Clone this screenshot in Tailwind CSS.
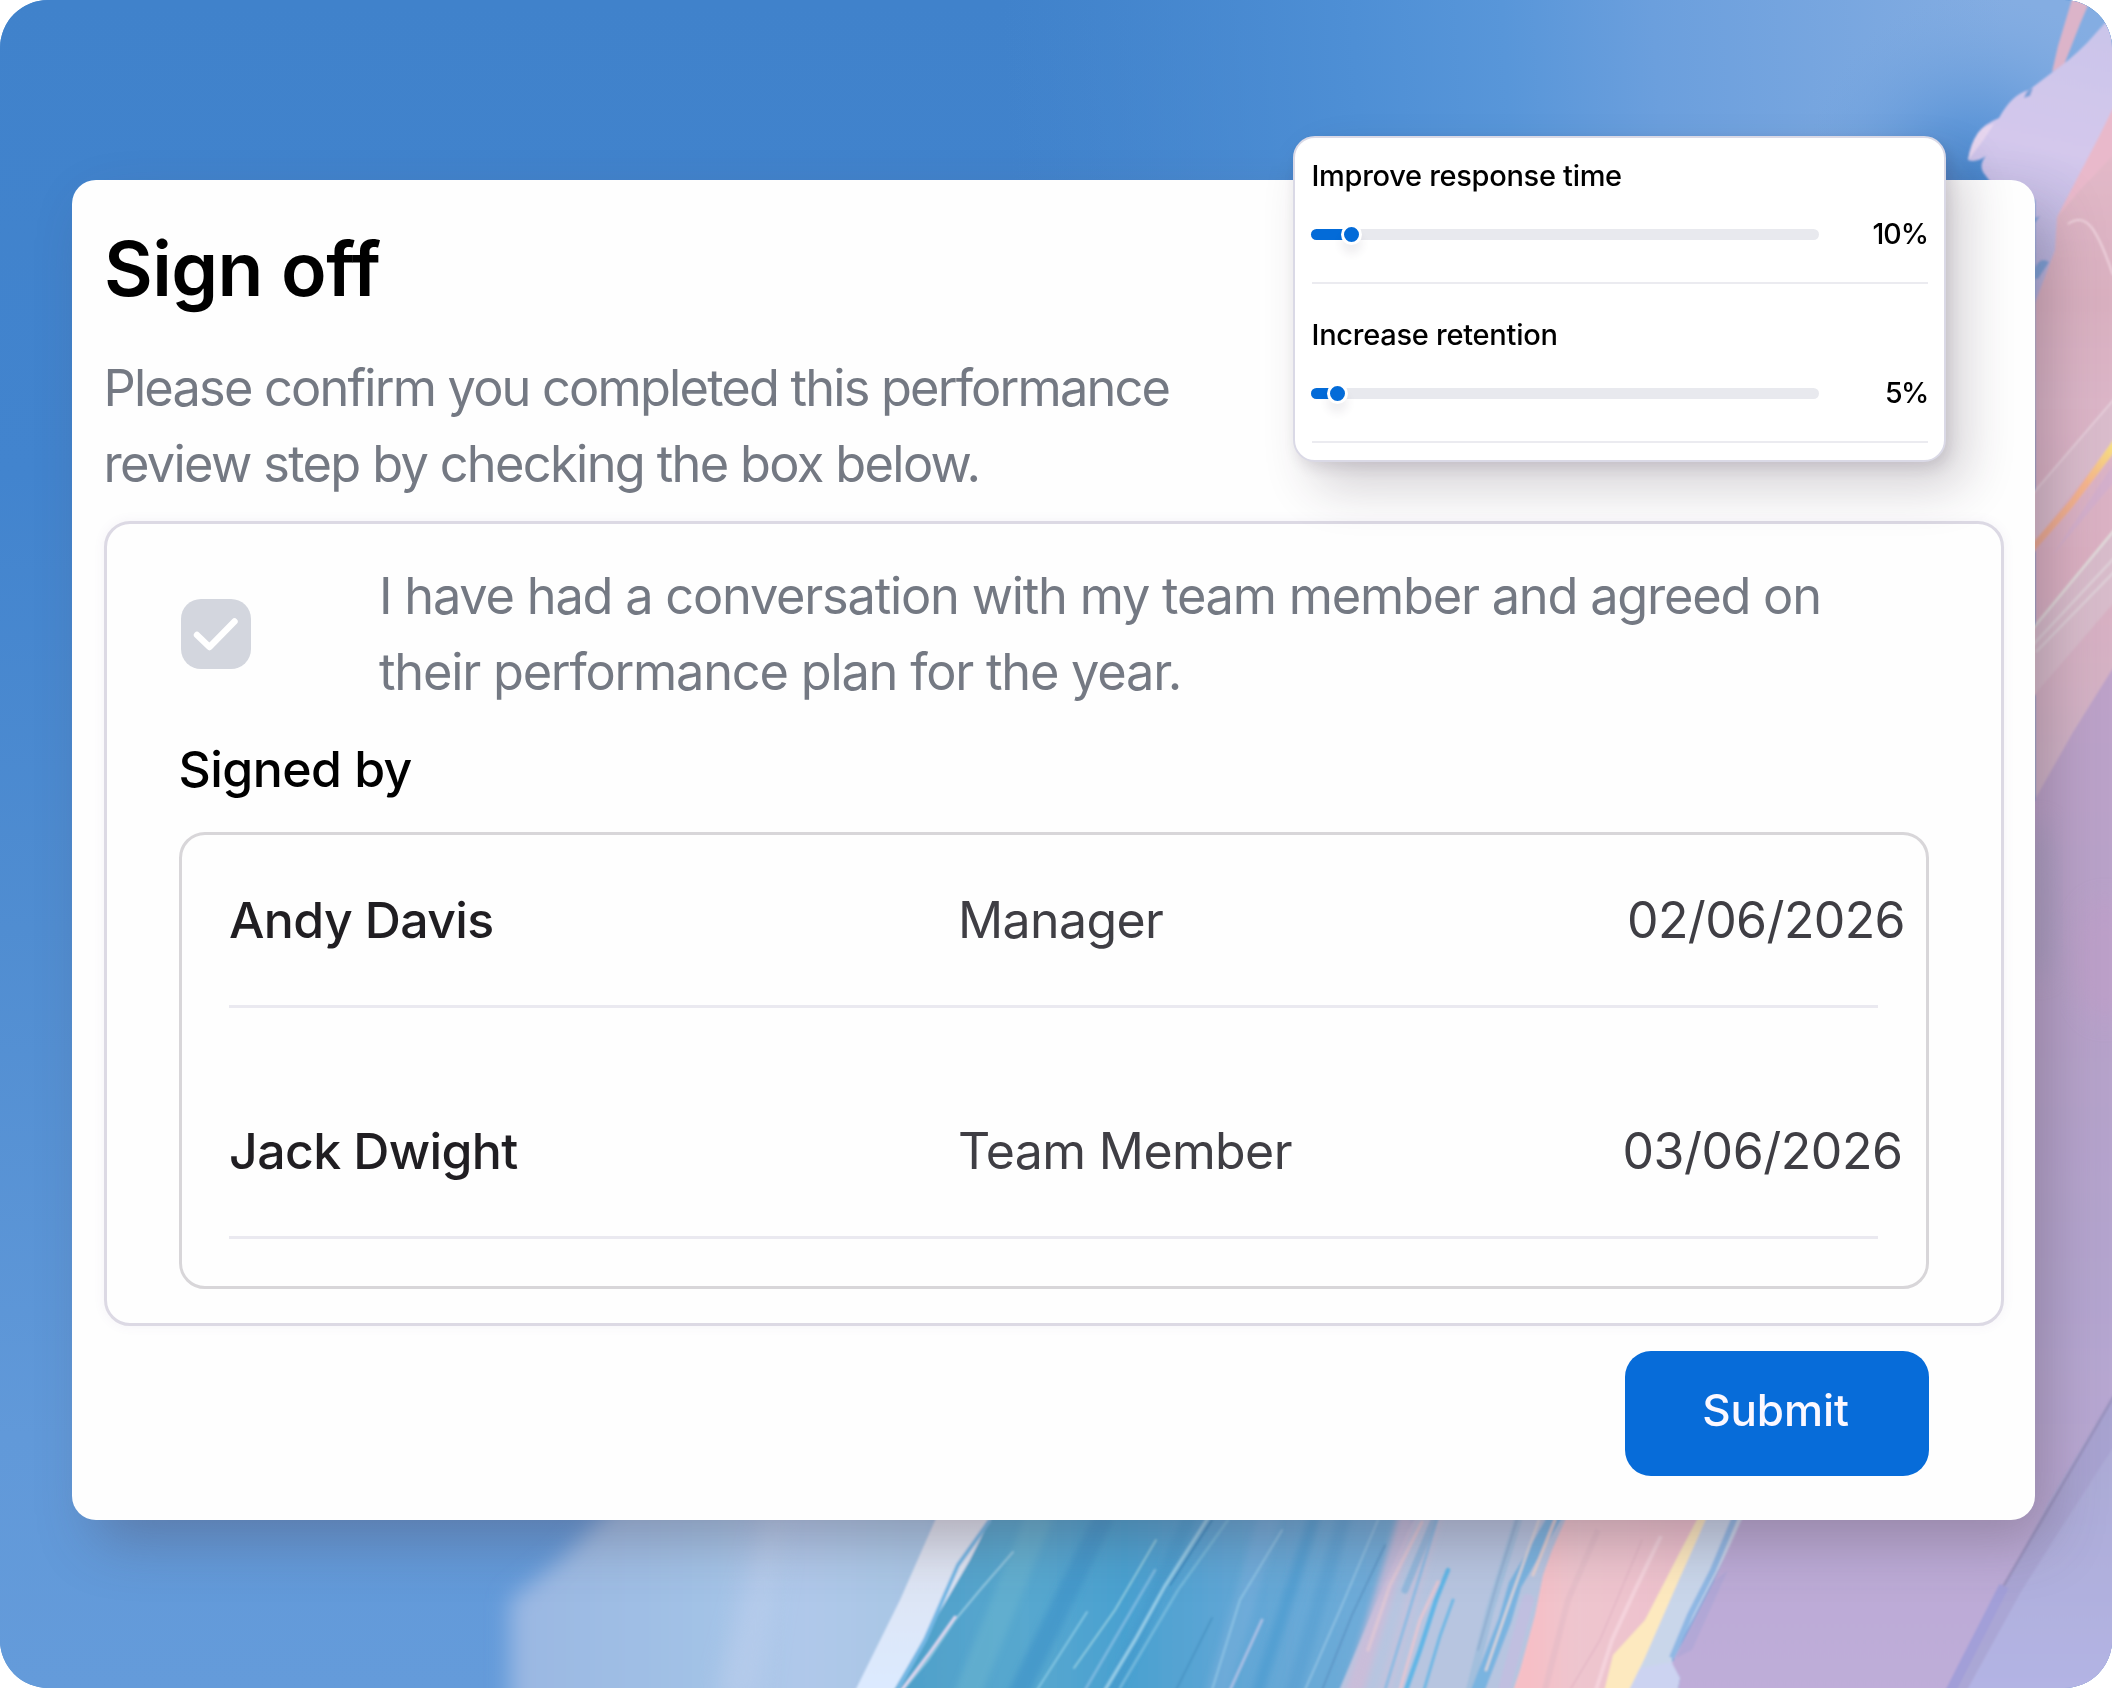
<!DOCTYPE html>
<html lang="en">
<head>
<meta charset="utf-8">
<title>Sign off</title>
<script src="https://cdn.jsdelivr.net/npm/@tailwindcss/browser@4"></script>
</head>
<body class="bg-white font-['Inter',sans-serif]">
<main class="relative flex h-[1688px] w-[2112px] overflow-hidden rounded-[48px] bg-[#4a89cf]">

  <!-- Painted backdrop -->
  <svg class="absolute inset-0 h-full w-full" viewBox="0 0 2112 1688" preserveAspectRatio="none" aria-hidden="true">
    <defs>
      <linearGradient id="sky" x1="0" y1="0" x2="0" y2="1"><stop offset="0" stop-color="#4082cb"/><stop offset=".28" stop-color="#4284ce"/><stop offset=".55" stop-color="#508dd1"/><stop offset=".85" stop-color="#6199d9"/><stop offset="1" stop-color="#649bda"/></linearGradient>
      <linearGradient id="skyR" x1="1000" y1="0" x2="2000" y2="-60" gradientUnits="userSpaceOnUse"><stop offset="0" stop-color="#4a8bd1" stop-opacity="0"/><stop offset=".35" stop-color="#4e8fd5"/><stop offset=".5" stop-color="#5896d9"/><stop offset=".65" stop-color="#6b9fdd"/><stop offset="1" stop-color="#84ade2"/></linearGradient>
      <radialGradient id="skyV" cx="1975" cy="185" r="190" gradientUnits="userSpaceOnUse"><stop offset="0" stop-color="#4686cd"/><stop offset=".35" stop-color="#5792d6" stop-opacity=".75"/><stop offset="1" stop-color="#7aa8e0" stop-opacity="0"/></radialGradient>
      <linearGradient id="lav" x1="2090" y1="30" x2="2030" y2="300" gradientUnits="userSpaceOnUse"><stop offset="0" stop-color="#cbc5ea"/><stop offset=".45" stop-color="#d4c8ec"/><stop offset="1" stop-color="#afaedb"/></linearGradient>
      <linearGradient id="rose" x1="0" y1="100" x2="0" y2="820" gradientUnits="userSpaceOnUse"><stop offset="0" stop-color="#e6bccb"/><stop offset=".28" stop-color="#d9b0c0"/><stop offset=".42" stop-color="#dcb6c8"/><stop offset=".65" stop-color="#dbb0c2"/><stop offset="1" stop-color="#cdb4c8"/></linearGradient>
      <linearGradient id="plum" x1="0" y1="680" x2="0" y2="1688" gradientUnits="userSpaceOnUse"><stop offset="0" stop-color="#bda2c9"/><stop offset=".3" stop-color="#b7a2c9"/><stop offset=".6" stop-color="#b4a5cf"/><stop offset="1" stop-color="#bfadd9"/></linearGradient>
      <linearGradient id="peri" x1="0" y1="1400" x2="0" y2="1688" gradientUnits="userSpaceOnUse"><stop offset="0" stop-color="#aba9d3"/><stop offset="1" stop-color="#b3b4e4"/></linearGradient>
      <linearGradient id="haze" x1="510" y1="0" x2="900" y2="0" gradientUnits="userSpaceOnUse"><stop offset="0" stop-color="#9ab7e2"/><stop offset=".5" stop-color="#a2c2e6"/><stop offset=".75" stop-color="#b0c9ea"/><stop offset="1" stop-color="#a9c6e5"/></linearGradient>
      <linearGradient id="teal" x1="900" y1="0" x2="1400" y2="0" gradientUnits="userSpaceOnUse"><stop offset="0" stop-color="#4fa0ca"/><stop offset=".25" stop-color="#58a8cf"/><stop offset=".45" stop-color="#4aa1d0"/><stop offset=".7" stop-color="#63a7d6"/><stop offset="1" stop-color="#72add9"/></linearGradient>
      <linearGradient id="pale" x1="0" y1="1520" x2="0" y2="1688" gradientUnits="userSpaceOnUse"><stop offset="0" stop-color="#dfe2ee"/><stop offset="1" stop-color="#dceaff"/></linearGradient>
      <linearGradient id="pink" x1="1530" y1="0" x2="1690" y2="0" gradientUnits="userSpaceOnUse"><stop offset="0" stop-color="#f6bfc6"/><stop offset=".3" stop-color="#eec6cf"/><stop offset="1" stop-color="#edc0cd"/></linearGradient>
      <linearGradient id="amber" x1="2035" y1="540" x2="2112" y2="440" gradientUnits="userSpaceOnUse"><stop offset="0" stop-color="#eeaa90"/><stop offset=".6" stop-color="#f6b58d"/><stop offset="1" stop-color="#f6e07f"/></linearGradient>
      <filter id="b1"><feGaussianBlur stdDeviation=".8"/></filter>
      <filter id="b3"><feGaussianBlur stdDeviation="3"/></filter>
      <filter id="b12" x="-20%" y="-40%" width="140%" height="180%"><feGaussianBlur stdDeviation="11"/></filter>
    </defs>

    <rect width="2112" height="1688" fill="url(#sky)"/>
    <rect x="1000" width="1112" height="420" fill="url(#skyR)"/>
    <rect x="1780" width="332" height="420" fill="url(#skyV)"/>

    <!-- Right edge -->
    <g filter="url(#b1)">
      <path d="M2073-4L2092-4L2080 24L2064 65L2052 72L2058 46Z" fill="#dcb4c9"/>
      <path d="M2130-5L2087 43Q2070 60 2054 71L2029 90Q2012 94 1999 118Q1984 124 1978 133Q1970 144 1968 160Q1976 163 1986 156Q1979 164 1983 172L1992 184L2035 200L2035 303L2047 290L2112 260Z" fill="url(#lav)"/>
      <path d="M1968 160Q1971 144 1978 133Q1984 125 1994 124L1982 142Z" fill="#e6d5ee"/>
      <path d="M2024 98Q2026 90 2033 88L2030 96Z M2035 218L2040 216L2035 223Z M2035 268Q2040 256 2049 262L2038 279L2035 279Z" fill="#7aa0d8"/>
      <path d="M2118 98L2100 135L2077 179L2057 217L2055 250L2035 303L2035 810L2118 810Z" fill="url(#rose)"/>
      <path d="M2118 98L2100 135L2077 179L2058 216L2080 190L2118 150Z" fill="#e9b9cb"/>
      <path d="M2068 224C2085 212 2096 225 2113 275" fill="none" stroke="#eed2dd" stroke-width="2"/>
      <path d="M2030 495L2116 395L2116 438L2030 548Z" fill="#dabccc"/>
      <path d="M2030 497L2116 397" stroke="#ead3de" stroke-width="1.5" fill="none"/>
      <path d="M2030 546L2070 500L2116 436L2116 450L2072 508L2030 556Z" fill="url(#amber)"/>
      <path d="M2052 556L2116 460L2116 480Z" fill="#d4b0cc"/>
      <path d="M2030 632L2116 528L2116 600L2030 700Z" fill="#d8bccb"/>
      <path d="M2030 632L2116 528" stroke="#e2dcdc" stroke-width="2.5"/>
      <path d="M2030 648L2116 556M2036 652L2116 570" stroke="#dfd0d8" stroke-width="2.5"/>
      <path d="M2118 660L2073 732L2030 808L2030 1688L2118 1688Z" fill="url(#plum)"/>
    </g>
    <ellipse cx="2105" cy="960" rx="32" ry="60" fill="#c09fc9" opacity=".6" filter="url(#b12)"/>
    <ellipse cx="2040" cy="900" rx="16" ry="80" fill="#a39dc0" opacity=".5" filter="url(#b12)"/>

    <!-- Bottom edge -->
    <path d="M628 1490L560 1560L510 1600L510 1720L950 1720L950 1490Z" fill="url(#haze)" filter="url(#b12)"/>
    <path d="M770 1500L745 1590L715 1700L760 1700L790 1500Z" fill="#b9cdec" opacity=".7" filter="url(#b12)"/>
    <g filter="url(#b1)">
      <path d="M1340 1500L1760 1500L1640 1700L1260 1700Z" fill="#b7c5e0"/>
      <path d="M1000 1500L1425 1500L1408 1530L1335 1700L885 1700Z" fill="url(#teal)"/>
      <path d="M944 1500L1000 1500L970 1560L894 1690L853 1695L900 1600Z" fill="url(#pale)"/>
      <path d="M990 1520L958 1565L925 1640L897 1690" stroke="#74b8e4" stroke-width="4" fill="none"/>
    </g>
    <g filter="url(#b3)" fill="none">
      <path d="M1105 1515L1015 1700" stroke="#3f94c9" stroke-width="20" opacity=".7"/>
      <path d="M1040 1515L965 1700" stroke="#6ab4cf" stroke-width="26" opacity=".55"/>
      <path d="M1190 1515L1110 1700" stroke="#4499cc" stroke-width="14" opacity=".6"/>
      <path d="M1270 1515L1215 1700" stroke="#7ab0dc" stroke-width="22" opacity=".5"/>
      <path d="M1315 1515L1255 1700" stroke="#4b9bd0" stroke-width="12" opacity=".7"/>
      <path d="M1345 1515L1290 1700" stroke="#5a9fd2" stroke-width="14" opacity=".7"/>
      <path d="M1408 1515L1352 1700" stroke="#cdbcd8" stroke-width="18" opacity=".85"/>
      <path d="M1436 1515L1382 1700" stroke="#c8c2dc" stroke-width="12" opacity=".7"/>
    </g>
    <g fill="none" stroke-linecap="round" filter="url(#b1)">
      <path d="M1013 1552L980 1590L955 1620L928 1660L903 1690" stroke="#93c8e0" stroke-width="2"/>
      <path d="M955 1617L928 1655L900 1692" stroke="#dfd6ee" stroke-width="3"/>
      <path d="M1156 1540L1115 1610L1074 1668" stroke="#8fcbe0" stroke-width="2"/>
      <path d="M1087 1612L1037 1690" stroke="#84c6e2" stroke-width="2"/>
      <path d="M1208 1518L1165 1586L1135 1640L1105 1690" stroke="#93cae6" stroke-width="3.5"/>
      <path d="M1212 1520L1170 1585" stroke="#3a88bd" stroke-width="1.6"/>
      <path d="M1228 1520L1178 1590L1120 1688" stroke="#74b9dd" stroke-width="2.5"/>
      <path d="M1155 1570L1085 1690" stroke="#7dbae0" stroke-width="2.5"/>
      <path d="M1282 1530L1240 1600L1212 1690" stroke="#8cc2e4" stroke-width="2"/>
      <path d="M1212 1618L1176 1690" stroke="#4790c2" stroke-width="1.6"/>
      <path d="M1262 1620L1230 1690" stroke="#a9bfe4" stroke-width="3"/>
      <path d="M1378 1520L1340 1610L1305 1690" stroke="#8cbfe2" stroke-width="2"/>
      <path d="M1385 1545L1352 1615L1322 1690" stroke="#5a93c3" stroke-width="1.5"/>
      <path d="M1422 1522L1390 1585L1368 1650" stroke="#dcc6d6" stroke-width="3.5"/>
      <path d="M1440 1510L1385 1690" stroke="#8fbbe2" stroke-width="3"/>
      <path d="M1434 1520L1405 1590" stroke="#82b4dc" stroke-width="7" opacity=".7"/>
      <path d="M1448 1570L1436 1600L1420 1650L1406 1690" stroke="#62b6e6" stroke-width="4.5"/>
      <path d="M1438 1582L1420 1620L1400 1690" stroke="#dfc6d4" stroke-width="3.5"/>
      <path d="M1453 1600L1440 1636L1424 1690" stroke="#72b8e4" stroke-width="3"/>
      <path d="M1518 1520L1490 1610L1470 1690" stroke="#98bcdc" stroke-width="8" opacity=".7"/>
      <path d="M1517 1520L1498 1580L1478 1650" stroke="#8ba8cc" stroke-width="1.5"/>
      <path d="M1556 1515L1515 1585L1505 1620L1476 1695" stroke="#7ab4e0" stroke-width="13"/>
      <path d="M1539 1520L1512 1595L1486 1670" stroke="#d9d4da" stroke-width="2.5"/>
      <path d="M1555 1520L1533 1575" stroke="#e4d0d0" stroke-width="3"/>
      <path d="M1528 1600L1504 1690" stroke="#c0bfe0" stroke-width="12"/>
    </g>
    <g filter="url(#b1)">
      <path d="M1574 1500L1706 1500L1660 1600L1620 1660L1604 1700L1510 1700L1520 1670L1535 1615L1543 1575L1552 1550Z" fill="url(#pink)"/>
      <path d="M1661 1536L1635 1590L1612 1640L1596 1690" stroke="#f5d3dc" stroke-width="4" fill="none"/>
      <path d="M1642 1540L1600 1640L1570 1690" stroke="#dfb2c2" stroke-width="1.5" fill="none" opacity=".7"/>
      <path d="M1598 1530L1568 1600L1545 1690" stroke="#e0b9c6" stroke-width="6" fill="none" opacity=".5"/>
      <path d="M1702 1510L1680 1552L1645 1620L1613 1655L1602 1700L1626 1700L1645 1658L1680 1578L1711 1510Z" fill="#fde9bf"/>
      <path d="M1710 1510L1680 1578L1645 1658L1624 1700L1676 1700L1680 1678L1672 1660L1713 1580L1748 1510Z" fill="#c9d6ea"/>
      <path d="M1640 1668L1672 1662L1680 1678L1674 1700L1625 1700Z" fill="#ccd3f1"/>
      <path d="M1738 1510L1713 1570L1690 1615L1672 1658" stroke="#90b8e4" stroke-width="6" fill="none"/>
      <path d="M1746 1510L1713 1582L1672 1663L1680 1678L1676 1700L2112 1700L2040 1500Z" fill="url(#plum)"/>
      <path d="M1713 1582L1676 1658L1692 1650L1728 1570Z" fill="#a5a4d6" opacity=".5"/>
      <path d="M2118 1388L2050 1500L2008 1580L1945 1700L2118 1700Z" fill="url(#peri)"/>
      <path d="M2118 1390L2045 1512L2006 1580L1948 1692L1966 1692L2022 1590L2060 1530L2118 1440Z" fill="#a59fcd" opacity=".6"/>
      <path d="M2114 1396L2036 1530L2000 1592" fill="none" stroke="#9089b4" stroke-width="2.5" opacity=".7"/>
      <path d="M2004 1586L1950 1692" fill="none" stroke="#a29fd8" stroke-width="10"/>
    </g>
  </svg>

  <!-- Sign off card -->
  <section class="relative mt-[180px] ml-[72px] flex h-[1340px] w-[1963px] flex-col rounded-3xl bg-[#fefefe] px-8 pt-11 shadow-[18px_26px_56px_-6px_rgba(80,65,80,0.34)]">
    <h1 class="h-[90px] text-[75px] leading-[90px] font-semibold tracking-[-0.6px] text-black">Sign off</h1>
    <p class="mt-9 -ml-[0.5px] h-[152px] text-[50.5px] leading-[76px] tracking-[-1.81px] whitespace-nowrap text-[#747983]">Please confirm you completed this performance<br><span class="tracking-[-1.66px]">review step by checking the box below.</span></p>

    <div class="mt-[19px] h-[805px] w-[1900px] rounded-[26px] border-3 border-[#dcd9e4] bg-[#fefefe] pt-[34px] pr-[72px] pl-[72px] shadow-[0_0_12px_rgba(120,90,160,0.07)]">
      <label class="flex items-center gap-32 pl-[2px]">
        <span class="flex size-[70px] shrink-0 items-center justify-center rounded-[20px] bg-[#d3d6de]">
          <svg class="size-[70px]" viewBox="0 0 70 70" fill="none" stroke="#fff" stroke-width="6.4" stroke-linecap="round" stroke-linejoin="round"><path d="M16 36L28.5 48L53.5 22.5"/></svg>
        </span>
        <span class="text-[50.5px] leading-[76px] tracking-[-1.22px] whitespace-nowrap text-[#747983]">I have had a conversation with my team member and agreed on<br>their performance plan for the year.</span>
      </label>

      <h2 class="mt-[29px] -ml-[0.5px] h-[60px] text-[50px] leading-[60px] font-medium tracking-[-0.55px] text-black">Signed by</h2>

      <div class="mt-[33px] h-[457px] w-[1750px] rounded-[26px] border-3 border-[#d8d6d9] pr-[48px] pl-[47px] text-[50px] leading-[60px] tracking-[-0.62px] text-[#3f3e44]">
        <div class="grid h-[173px] grid-cols-[729px_666px_1fr] items-end border-b-3 border-[#eae9f0] pb-[55px] whitespace-nowrap">
          <span class="font-medium text-[#201e22]">Andy Davis</span><span>Manager</span><span class="ml-[3px]">02/06/2026</span>
        </div>
        <div class="grid h-[231px] grid-cols-[729px_666px_1fr] items-end border-b-3 border-[#eae9f0] pb-[55px] whitespace-nowrap">
          <span class="font-medium text-[#201e22]">Jack Dwight</span><span>Team Member</span><span class="-ml-[1.5px] tracking-[-0.45px]">03/06/2026</span>
        </div>
      </div>
    </div>

    <button class="mt-[25px] mr-[74px] h-[125px] w-[304px] self-end rounded-[26px] bg-[#076cd9] pr-[3px] pb-[7px] text-[44px] leading-[60px] font-medium tracking-[-0.1px] text-[#fbf8ff]">Submit</button>
  </section>

  <!-- Goals overlay -->
  <aside class="absolute top-[136px] left-[1293px] flex h-[326px] w-[653px] flex-col gap-[31px] rounded-[22px] border-2 border-[#dad9e6] bg-white pt-[18px] pr-4 pl-[17px] text-[29px] leading-10 font-medium text-black shadow-[20px_26px_50px_rgba(50,35,55,0.2),4px_6px_14px_rgba(50,35,55,0.12)]">
    <div class="border-b-2 border-[#ebebf0] pb-[28px]">
      <h3 class="-ml-[0.5px] tracking-[-0.3px]">Improve response time</h3>
      <div class="mt-[18px] flex h-10 items-center justify-between">
        <div class="-ml-px flex h-[11px] w-[508px] items-center rounded-full bg-[#e8e9ee]">
          <div class="h-[11px] w-[34px] rounded-l-full bg-[#036bd8]"></div>
          <div class="-ml-1 size-[21px] shrink-0 rounded-full border-[3.5px] border-white bg-[#036bd8] shadow-[0_9px_9px_rgba(60,50,80,0.08)]"></div>
        </div>
        <span class="text-[28.5px] tracking-[-1px]">10%</span>
      </div>
    </div>
    <div class="border-b-2 border-[#ebebf0] pb-[28px]">
      <h3 class="-ml-[0.5px] tracking-[-0.26px]">Increase retention</h3>
      <div class="mt-[18px] flex h-10 items-center justify-between">
        <div class="-ml-px flex h-[11px] w-[508px] items-center rounded-full bg-[#e8e9ee]">
          <div class="h-[11px] w-5 rounded-l-full bg-[#036bd8]"></div>
          <div class="-ml-1 size-[21px] shrink-0 rounded-full border-[3.5px] border-white bg-[#036bd8] shadow-[0_9px_9px_rgba(60,50,80,0.08)]"></div>
        </div>
        <span class="text-[28.5px] tracking-[-1.4px]">5%</span>
      </div>
    </div>
  </aside>
</main>
</body>
</html>
